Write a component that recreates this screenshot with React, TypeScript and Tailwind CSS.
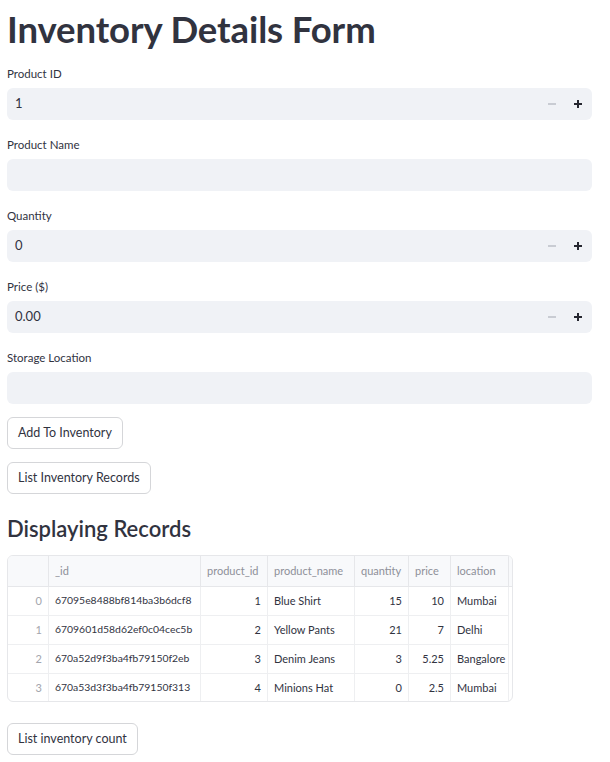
import React from "react";

const font = { fontFamily: "Lato, 'Noto Sans', sans-serif" };

type FieldProps = {
  label: string;
  value?: string;
  stepper?: boolean;
};

const Field = ({ label, value, stepper }: FieldProps) => {
  return (
    <div className="flex flex-col">
      <label className="text-[11.5px] text-[#31333f] h-[15px] leading-[15px] mb-[7px]">{label}</label>
      <div className="h-[32px] bg-[#f0f2f6] rounded-[6px] flex items-center pl-[8px] pr-[10px]">
        <span className="flex-1 text-[13px] text-[#31333f]">{value}</span>
        {stepper && (
          <div className="flex items-center gap-[18px]">
            <span className="w-[8px] h-[1.5px] bg-[#c9ccd3]" />
            <span className="relative w-[8px] h-[8px]">
              <span className="absolute left-0 top-[3px] w-[8px] h-[2px] bg-[#262730]" />
              <span className="absolute top-0 left-[3px] w-[2px] h-[8px] bg-[#262730]" />
            </span>
          </div>
        )}
      </div>
    </div>
  );
};

const Button = ({ children }: { children: React.ReactNode }) => (
  <button className="self-start h-[32px] px-[10px] border border-[#d5d6d9] rounded-[6px] bg-white text-[12.5px] text-[#31333f]">
    {children}
  </button>
);

const rows = [
  ["0", "67095e8488bf814ba3b6dcf8", "1", "Blue Shirt", "15", "10", "Mumbai"],
  ["1", "6709601d58d62ef0c04cec5b", "2", "Yellow Pants", "21", "7", "Delhi"],
  ["2", "670a52d9f3ba4fb79150f2eb", "3", "Denim Jeans", "3", "5.25", "Bangalore"],
  ["3", "670a53d3f3ba4fb79150f313", "4", "Minions Hat", "0", "2.5", "Mumbai"],
];

const cols = [
  { name: "", w: "w-[41px]", right: true },
  { name: "_id", w: "w-[152px]", right: false },
  { name: "product_id", w: "w-[67px]", right: true },
  { name: "product_name", w: "w-[87px]", right: false },
  { name: "quantity", w: "w-[54px]", right: true },
  { name: "price", w: "w-[42px]", right: true },
  { name: "location", w: "w-[58px]", right: false },
];

const DataTable = () => (
  <div className="w-[506px] h-[147px] border border-[#e6e7ea] rounded-[6px] overflow-hidden text-[11px]">
    <div className="flex h-[31px] bg-[#f8f9fb] border-b border-[#e6e7ea]">
      {cols.map((c, i) => (
        <div
          key={i}
          className={`${c.w} shrink-0 flex items-center px-[6px] text-[#8e9099] border-r border-[#e6e7ea]`}
        >
          {c.name}
        </div>
      ))}
    </div>
    {rows.map((r, ri) => (
      <div key={ri} className="flex h-[29px]">
        {r.map((cell, ci) => (
          <div
            key={ci}
            className={`${cols[ci].w} shrink-0 flex items-center px-[6px] border-r border-b border-[#eeeff1] whitespace-nowrap overflow-hidden ${cols[ci].right ? "justify-end" : ""} ${ci === 0 ? "text-[#a3a5ad]" : "text-[#31333f]"}`}
          >
            <span className={ci === 1 ? "text-[10.4px]" : ""}>{cell}</span>
          </div>
        ))}
      </div>
    ))}
  </div>
);

export default function App() {
  return (
    <div className="bg-white min-h-[762px] px-[7px] pt-[7px] pr-[18px]" style={font}>
      <h1 className="text-[36.5px] font-bold text-[#31333f] leading-[44px] mb-[15px] tracking-[-0.1px]">
        Inventory Details Form
      </h1>
      <div className="flex flex-col gap-[17px]">
        <Field label="Product ID" value="1" stepper />
        <Field label="Product Name" />
        <Field label="Quantity" value="0" stepper />
        <Field label="Price ($)" value="0.00" stepper />
        <Field label="Storage Location" />
      </div>
      <div className="flex flex-col gap-[13px] mt-[13px]">
        <Button>Add To Inventory</Button>
        <Button>List Inventory Records</Button>
      </div>
      <h2 className="text-[22px] font-semibold text-[#31333f] mt-[19px] mb-[10px] leading-[32px]">Displaying Records</h2>
      <DataTable />
      <div className="mt-[21px]">
        <Button>List inventory count</Button>
      </div>
    </div>
  );
}
